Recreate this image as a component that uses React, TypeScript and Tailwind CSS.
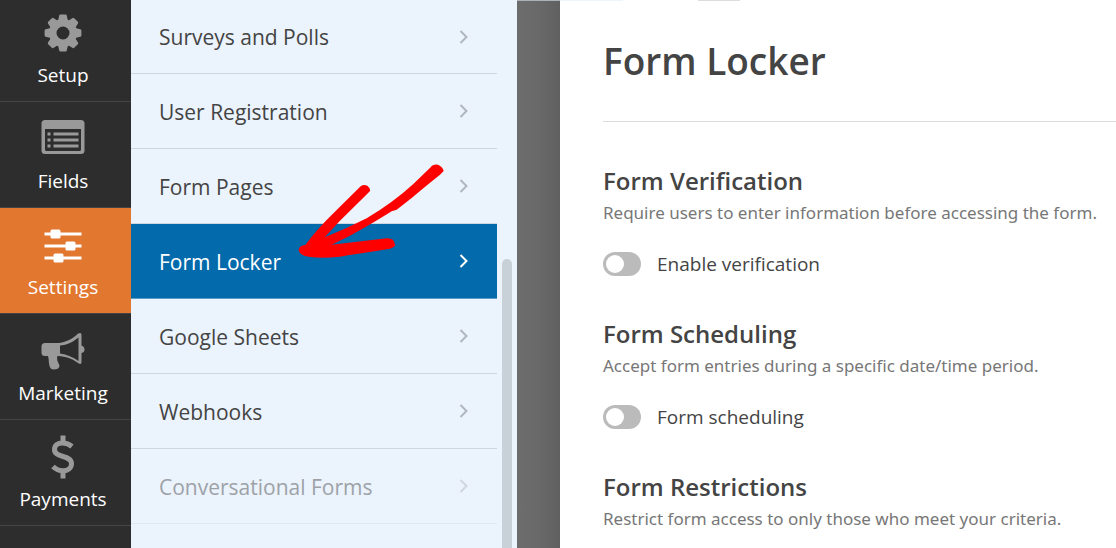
import { useState } from "react";
import type { ReactNode } from "react";
import clsx from "clsx";

interface NavItem {
  label: string;
  icon: ReactNode;
}

interface LockerSection {
  title: string;
  description: string;
  toggle?: string;
}

const GearIcon = () => (
  <svg width="44" height="44" viewBox="0 0 44 44" fill="currentColor" aria-hidden="true">
    <path
      fillRule="evenodd"
      d="M22 8a14 14 0 1 0 0 28a14 14 0 1 0 0-28zM22 15.5a6.5 6.5 0 1 1 0 13a6.5 6.5 0 1 1 0-13z"
    />
    {[0, 45, 90, 135, 180, 225, 270, 315].map((angle) => (
      <path
        key={angle}
        d="M16.8 11L18.2 4.6Q18.4 3.6 19.4 3.6H24.6Q25.6 3.6 25.8 4.6L27.2 11Z"
        transform={`rotate(${angle} 22 22)`}
      />
    ))}
  </svg>
);

const FieldsIcon = () => (
  <svg width="44" height="44" viewBox="0 2 44 44" fill="currentColor" aria-hidden="true">
    <path
      fillRule="evenodd"
      d="M4 5H40Q43.5 5 43.5 8.5V35.5Q43.5 39 40 39H4Q.5 39 .5 35.5V8.5Q.5 5 4 5zM4 14V34.5Q4 36 5.5 36H38.5Q40 36 40 34.5V14z"
    />
    <path d="M6.5 17.5h3v3h-3zM12.5 17.5h25v3h-25zM6.5 23.5h3v3h-3zM12.5 23.5h25v3h-25zM6.5 29.5h3v3h-3zM12.5 29.5h25v3h-25z" />
  </svg>
);

const SlidersIcon = () => (
  <svg width="44" height="44" viewBox="0 -1 44 44" fill="currentColor" aria-hidden="true">
    <path d="M3.5 8.5h37v3h-37zM3.5 20.5h37v3h-37zM3.5 32.5h37v3h-37z" />
    <rect x="9.5" y="5.5" width="10" height="9" rx="1.5" />
    <rect x="24.5" y="17.5" width="10" height="9" rx="1.5" />
    <rect x="12.5" y="29.5" width="10" height="9" rx="1.5" />
  </svg>
);

const BullhornIcon = () => (
  <svg width="44" height="44" viewBox="0 -1 44 44" fill="currentColor" aria-hidden="true">
    <path d="M4 13H18V26H16.5C15 30 18 33 18.5 36Q18 39.5 12.5 39.5Q9.5 39.5 8.5 36C7.5 32 8 29 7 26H4Q.5 26 .5 23V16.5Q.5 13 4 13z" />
    <path
      fillRule="evenodd"
      d="M17 13C25 12.5 32 8.5 36.5 4Q40.5 1.5 40.5 5V15.5Q43.5 16.5 43.5 19.5Q43.5 22.5 40.5 23V32Q40.5 35.5 37 33C31 28.5 25 26.5 17 26zM19 15.5V23.5C26 24.5 32 27 37.5 31V7.5C32 12 26 15 19 15.5z"
    />
  </svg>
);

const DollarIcon = () => (
  <svg width="44" height="44" viewBox="0 0 44 44" fill="none" stroke="currentColor" aria-hidden="true">
    <path
      strokeWidth="5"
      d="M31 11.5C28 9 25 8 21.5 8C16.5 8 13.5 10.5 13.5 14.5C13.5 23.5 30.5 19.5 30.5 28.5C30.5 33 27 35.8 22 35.8C18 35.8 15 34.5 12 31.5"
    />
    <path strokeWidth="5" d="M22 .5V8M22 36V43.5" />
  </svg>
);

const ChevronIcon = () => (
  <svg width="10" height="16" viewBox="0 0 10 16" fill="none" stroke="currentColor" strokeWidth="2" aria-hidden="true">
    <path d="M1.5 2L7.5 8L1.5 14" />
  </svg>
);

const navItems: NavItem[] = [
  { label: "Setup", icon: <GearIcon /> },
  { label: "Fields", icon: <FieldsIcon /> },
  { label: "Settings", icon: <SlidersIcon /> },
  { label: "Marketing", icon: <BullhornIcon /> },
  { label: "Payments", icon: <DollarIcon /> },
];

const menuItems = [
  "Surveys and Polls",
  "User Registration",
  "Form Pages",
  "Form Locker",
  "Google Sheets",
  "Webhooks",
  "Conversational Forms",
];

const sections: LockerSection[] = [
  {
    title: "Form Verification",
    description: "Require users to enter information before accessing the form.",
    toggle: "Enable verification",
  },
  {
    title: "Form Scheduling",
    description: "Accept form entries during a specific date/time period.",
    toggle: "Form scheduling",
  },
  {
    title: "Form Restrictions",
    description: "Restrict form access to only those who meet your criteria.",
  },
];

const Toggle = ({ label }: { label: string }) => {
  const [enabled, setEnabled] = useState(false);

  return (
    <label className="mt-[19px] flex h-8 items-center gap-4 text-[19px] text-[#444]">
      <input
        type="checkbox"
        role="switch"
        checked={enabled}
        onChange={(e) => setEnabled(e.target.checked)}
        className="flex h-6 w-[38px] shrink-0 appearance-none items-center rounded-full bg-[#bbb] px-[3px] before:size-[18px] before:rounded-full before:bg-white before:content-[''] checked:justify-end checked:bg-[#036aab]"
      />
      {label}
    </label>
  );
};

const Sidebar = () => (
  <nav className="w-[131px] shrink-0 bg-[#2d2d2d]">
    {navItems.map((item) => (
      <button
        key={item.label}
        type="button"
        className={clsx(
          "flex h-[106px] w-full flex-col items-center justify-end gap-1.5 border-b border-[#444] pb-3 pr-[5px] first:h-[102px]",
          item.label === "Settings" ? "bg-[#e27730] text-white" : "text-[#999]"
        )}
      >
        {item.icon}
        <span className="text-[19px] leading-7 text-white">{item.label}</span>
      </button>
    ))}
  </nav>
);

const SettingsMenu = () => (
  <aside className="relative flex w-[386px] shrink-0 bg-[#ebf3fc]">
    <ul className="flex-1">
      {menuItems.map((item) => (
        <li key={item} className="group">
          <a
            href="#"
            className={clsx(
              "flex h-[75px] items-center justify-between border-b px-7 text-[21px] group-first:h-[74px]",
              item === "Form Locker" && "border-[#5e9cc8] bg-[#036aab] text-white",
              item === "Conversational Forms" && "border-[#dfe6f0] text-[#9da2a8]",
              item !== "Form Locker" && item !== "Conversational Forms" && "border-[#ced7e0] text-[#444]"
            )}
          >
            <span className="pt-[3px]">{item}</span>
            <span
              className={clsx(
                item === "Form Locker" && "text-white",
                item === "Conversational Forms" && "text-[#d0d6de]",
                item !== "Form Locker" && item !== "Conversational Forms" && "text-[#b0b6bd]"
              )}
            >
              <ChevronIcon />
            </span>
          </a>
        </li>
      ))}
    </ul>
    <div className="flex w-5 flex-col px-[5px] pt-[259px]">
      <div className="flex-1 rounded-t-full bg-[#c8d0d8]" />
    </div>

    {/* hand-drawn pointer to the active item */}
    <svg
      className="pointer-events-none absolute left-[149px] top-[150px]"
      width="240"
      height="160"
      viewBox="0 0 720 480"
      fill="#f00"
      aria-hidden="true"
    >
      <path d="M242 109Q251 102 262 107Q272 115 270 123L256 137L180 212L134 262Q200 236 260 205Q340 157 400 102L452 52Q458 42 474 44Q489 51 491 63L480 74Q430 114 396 143L350 179L335 184Q270 225 210 257L155 284L320 265Q338 265 341 273L346 286Q342 294 330 296Q210 315 180 320Q110 327 75 318Q58 312 56 300Q57 287 76 285Q108 240 170 180Z" />
    </svg>
  </aside>
);

const App = () => {
  return (
    <div className="flex h-screen overflow-hidden bg-white font-['Open_Sans','Noto_Sans',sans-serif]">
      <Sidebar />
      <SettingsMenu />
      <div className="w-[43px] shrink-0 border-t border-[#a9b2ba] bg-linear-to-r from-[#6d6d6d] via-[#696969] to-[#606060]" />
      <main className="min-w-0 flex-1">
        {/* bottom edge of the toolbar above the panel */}
        <div className="flex h-px">
          <div className="w-[63px] bg-[#eef5fd]" />
          <div className="ml-[75px] w-[42px] bg-[#ddd]" />
        </div>
        <div className="pl-[43px]">
          <header className="border-b border-[#ddd] py-8">
            <h1 className="text-[37px] font-semibold leading-14 text-[#444]">Form Locker</h1>
          </header>
          <div className="flex flex-col gap-[38px] pt-[43px]">
            {sections.map((section) => (
              <section key={section.title}>
                <h2 className="text-2xl font-semibold leading-8 text-[#444]">{section.title}</h2>
                <p className="font-['Noto_Sans',sans-serif] text-[17px] leading-8 text-[#777]">{section.description}</p>
                {section.toggle && <Toggle label={section.toggle} />}
              </section>
            ))}
          </div>
        </div>
      </main>
    </div>
  );
};

export default App;
